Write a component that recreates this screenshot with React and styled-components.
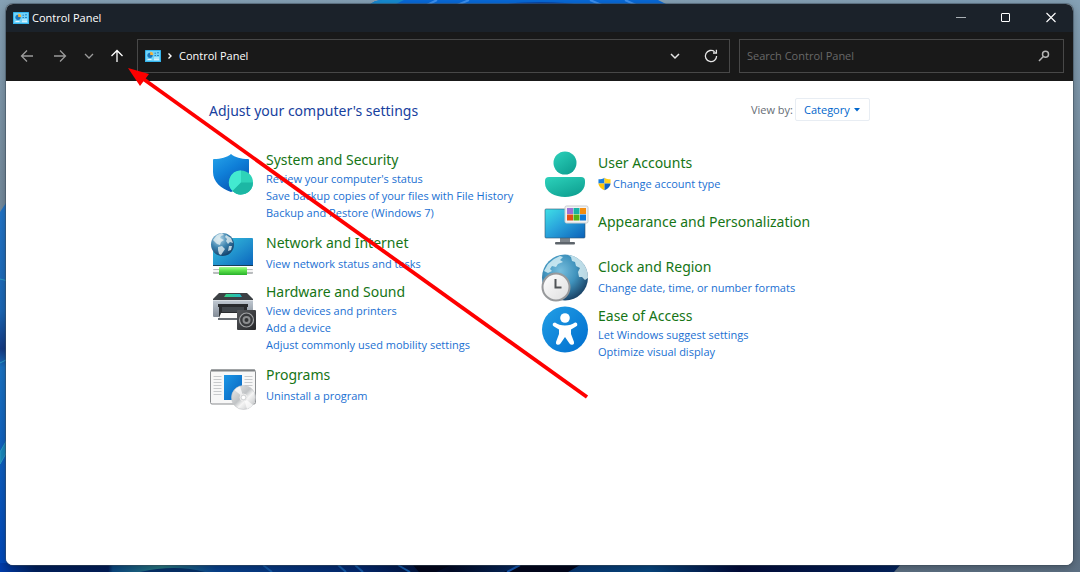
import React, { useState } from "react";
import styled, { createGlobalStyle } from "styled-components";

const leftCategories = [
  {
    title: "System and Security",
    icon: ShieldIcon,
    links: [
      "Review your computer's status",
      "Save backup copies of your files with File History",
      "Backup and Restore (Windows 7)",
    ],
  },
  {
    title: "Network and Internet",
    icon: NetworkIcon,
    links: ["View network status and tasks"],
  },
  {
    title: "Hardware and Sound",
    icon: PrinterIcon,
    links: [
      "View devices and printers",
      "Add a device",
      "Adjust commonly used mobility settings",
    ],
  },
  { title: "Programs", icon: ProgramsIcon, links: ["Uninstall a program"] },
];

const rightCategories = [
  {
    title: "User Accounts",
    icon: UserIcon,
    links: ["Change account type"],
    admin: true,
  },
  { title: "Appearance and Personalization", icon: AppearanceIcon, links: [] },
  {
    title: "Clock and Region",
    icon: ClockIcon,
    links: ["Change date, time, or number formats"],
  },
  {
    title: "Ease of Access",
    icon: AccessIcon,
    links: ["Let Windows suggest settings", "Optimize visual display"],
  },
];

export default function App() {
  const [query, setQuery] = useState("");
  const [view, setView] = useState("Category");

  return (
    <Desktop>
      <GlobalStyle />
      <Wallpaper />

      <Window>
        <TitleBar>
          <PanelIcon />
          <WindowTitle>Control Panel</WindowTitle>
          <WindowButton type="button" aria-label="Minimize">
            <svg width="12" height="12" viewBox="0 0 12 12">
              <path d="M1 5.5h10" stroke="#aab0b5" />
            </svg>
          </WindowButton>
          <WindowButton type="button" aria-label="Maximize">
            <svg width="12" height="12" viewBox="0 0 12 12">
              <rect x="1.5" y="1.5" width="8" height="8" rx="0.5" fill="none" stroke="#fff" />
            </svg>
          </WindowButton>
          <WindowButton type="button" aria-label="Close">
            <svg width="12" height="12" viewBox="0 0 12 12">
              <path d="M1.5 1l9 9M10.5 1l-9 9" stroke="#fff" strokeWidth="1.1" />
            </svg>
          </WindowButton>
        </TitleBar>

        <Toolbar>
          <NavButtons>
            <NavButton type="button" aria-label="Back" $width={33}>
              <svg width="16" height="16" viewBox="0 0 16 16">
                <path d="M14 8H2.5M8 2.5L2.5 8L8 13.5" />
              </svg>
            </NavButton>
            <NavButton type="button" aria-label="Forward" $width={34}>
              <svg width="16" height="16" viewBox="0 0 16 16">
                <path d="M2 8h11.5M8 2.5L13.5 8L8 13.5" />
              </svg>
            </NavButton>
            <NavButton type="button" aria-label="Recent locations" $width={24}>
              <svg width="10" height="10" viewBox="0 0 10 10">
                <path d="M1 3l4 4l4-4" />
              </svg>
            </NavButton>
            <NavButton type="button" aria-label="Up" $width={32} $active>
              <svg width="16" height="16" viewBox="0 0 16 16">
                <path d="M8 14V2.5M2.5 8L8 2.5L13.5 8" />
              </svg>
            </NavButton>
          </NavButtons>

          <AddressBar>
            <PanelIcon />
            <svg width="6" height="8" viewBox="0 0 6 8">
              <path d="M1.5 1.5L4 4L1.5 6.5" fill="none" stroke="#fff" strokeWidth="1.4" />
            </svg>
            <Crumb href="#control-panel">Control Panel</Crumb>
            <BarButton type="button" aria-label="Previous locations">
              <svg width="10" height="10" viewBox="0 0 10 10">
                <path d="M1 3l4 4l4-4" fill="none" stroke="#e6e6e6" strokeWidth="1.5" />
              </svg>
            </BarButton>
            <BarButton type="button" aria-label="Refresh">
              <svg width="14" height="14" viewBox="0 0 14 14">
                <path d="M12.6 7a5.6 5.6 0 1 1-2-4.3" fill="none" stroke="#e6e6e6" strokeWidth="1.3" />
                <path d="M9 4h3.4V0.8" fill="none" stroke="#e6e6e6" strokeWidth="1.3" />
              </svg>
            </BarButton>
          </AddressBar>

          <SearchBox>
            <input
              type="search"
              aria-label="Search Control Panel"
              placeholder="Search Control Panel"
              value={query}
              onChange={(e) => setQuery(e.target.value)}
            />
            <svg width="12" height="12" viewBox="0 0 12 12">
              <circle cx="7.5" cy="4.3" r="3" fill="none" stroke="#b5b5b5" strokeWidth="1.5" />
              <path d="M5.3 6.5L1 11" stroke="#b5b5b5" strokeWidth="1.5" />
            </svg>
          </SearchBox>
        </Toolbar>

        <Content>
          <Inner>
            <Heading>
              <h1>Adjust your computer's settings</h1>
              <label htmlFor="view">View by:</label>
              <SelectWrap>
                <select id="view" value={view} onChange={(e) => setView(e.target.value)}>
                  <option>Category</option>
                  <option>Large icons</option>
                  <option>Small icons</option>
                </select>
                <svg width="6" height="4" viewBox="0 0 6 4">
                  <path d="M0 0h6L3 3.5z" fill="#0066cc" />
                </svg>
              </SelectWrap>
            </Heading>

            <Columns>
              <CategoryList items={leftCategories} />
              <CategoryList items={rightCategories} />
            </Columns>
          </Inner>
        </Content>
      </Window>

      <PointerArrow viewBox="0 0 462 332" aria-hidden="true">
        <path d="M14 10L459 329" stroke="#fe0000" strokeWidth="3.8" />
        <path d="M0 0L21 6L12 18z" fill="#fe0000" />
      </PointerArrow>
    </Desktop>
  );
}

function CategoryList({ items }) {
  return (
    <List>
      {items.map(({ title, icon: Icon, links, admin }) => (
        <Category key={title} $top={links.length > 1}>
          <Icon />
          <CategoryText $count={links.length}>
            <CategoryTitle href="#category">{title}</CategoryTitle>
            {links.map((text) => (
              <TaskLink key={text} href="#task">
                {admin && <AdminShield />}
                {text}
              </TaskLink>
            ))}
          </CategoryText>
        </Category>
      ))}
    </List>
  );
}

/* ---------------------- icons ---------------------- */

function PanelIcon() {
  return (
    <svg width="16" height="12" viewBox="0 0 16 12">
      <rect width="16" height="12" rx="0.5" fill="#35b5ee" />
      <rect x="1" y="1" width="14" height="10" fill="#70d2f8" />
      <circle cx="5" cy="5.3" r="2.6" fill="#1b74ba" />
      <path d="M5.2 4.9V1.8a3 3 0 0 1 3 3.1z" fill="#f5b13b" />
      <path d="M2.5 9.5h4" stroke="#e8f8ff" />
      <path d="M9.5 3.2h1.5M12 2.8h2M9.5 5.5h1.5M12 5.5h2" stroke="#2a82bf" />
      <path d="M9 8h5M9 9.7h5" stroke="#e8f8ff" />
    </svg>
  );
}

function AdminShield() {
  return (
    <svg width="13" height="14" viewBox="0 0 14 14">
      <path d="M7 0.3C5.5 1.5 3 2 0.5 2v4.500H7z" fill="#1a7fe0" />
      <path d="M7 0.3C8.5 1.5 11 2 13.5 2v4.500H7z" fill="#ffd21c" />
      <path d="M0.5 6.5C0.8 10 4 12.5 7 13.7V6.5z" fill="#fcc60b" />
      <path d="M13.5 6.5C13.2 10 10 12.5 7 13.7V6.5z" fill="#0f62c4" />
    </svg>
  );
}

function ShieldIcon() {
  return (
    <svg width="48" height="48" viewBox="0 0 48 48">
      <defs>
        <linearGradient id="shield" x1="0" y1="0" x2="0.6" y2="1">
          <stop offset="0" stopColor="#27a5ea" />
          <stop offset="0.5" stopColor="#0f7fd8" />
          <stop offset="1" stopColor="#0756b4" />
        </linearGradient>
      </defs>
      <path
        d="M22 4C18 7.500 12 9 5 9Q4 9 4 10V22C4 32 12 38.500 22 42C32 38.500 40 32 40 22V10Q40 9 39 9C32 9 26 7.500 22 4z"
        fill="url(#shield)"
      />
      <circle cx="32" cy="32.5" r="12" fill="#2ed3b8" />
      <path d="M32 32.500L23.500 41A12 12 0 0 1 32 20.500z" fill="#43e9d0" />
      <path d="M32 32.500h12A12 12 0 0 1 23.500 41z" fill="#1cb7a4" />
    </svg>
  );
}

function NetworkIcon() {
  return (
    <svg width="48" height="48" viewBox="0 0 48 48">
      <defs>
        <linearGradient id="netScreen" x1="0" y1="0" x2="1" y2="1">
          <stop offset="0" stopColor="#36c5de" />
          <stop offset="0.5" stopColor="#2396cf" />
          <stop offset="1" stopColor="#0a64bd" />
        </linearGradient>
        <radialGradient id="netGlobe" cx="0.35" cy="0.25" r="0.8">
          <stop offset="0" stopColor="#b9dcec" />
          <stop offset="0.5" stopColor="#3d83ae" />
          <stop offset="1" stopColor="#123f68" />
        </radialGradient>
        <linearGradient id="cable" x1="0" y1="0" x2="0" y2="1">
          <stop offset="0" stopColor="#a5fa8e" />
          <stop offset="0.4" stopColor="#61e64f" />
          <stop offset="1" stopColor="#28b02b" />
        </linearGradient>
      </defs>
      <rect x="4" y="8" width="40" height="28" rx="1" fill="url(#netScreen)" />
      <path d="M4 35.500h40" stroke="#173e57" strokeWidth="1.2" />
      <rect x="4" y="39" width="40" height="5" rx="1" fill="#b9bcbe" />
      <path d="M4 41h40" stroke="#f5f5f5" strokeWidth="2" />
      <rect x="10" y="37" width="28" height="8" rx="0.5" fill="url(#cable)" />
      <circle cx="13.5" cy="14.5" r="11.5" fill="url(#netGlobe)" />
      <path
        d="M4 10l4-5l5-2l2 2l-3 1l-1 2l4 2l-3 2l-1 3l-3-1l-2-2zM17 5l5 3l2 5l-3-1l-2 2l-2-3l1-2l-2-2zM9 17l4-1l3 3l-2 3l-2 3l-2-1l-1-4zM20 16l3 0l-1 4l-3 1z"
        fill="#e4eff1"
        opacity="0.8"
      />
    </svg>
  );
}

function PrinterIcon() {
  return (
    <svg width="48" height="48" viewBox="0 0 48 48">
      <defs>
        <linearGradient id="printer" x1="0" y1="0" x2="0" y2="1">
          <stop offset="0" stopColor="#c1c9d2" />
          <stop offset="1" stopColor="#848d98" />
        </linearGradient>
        <linearGradient id="speaker" x1="0" y1="0" x2="1" y2="1">
          <stop offset="0" stopColor="#55585c" />
          <stop offset="1" stopColor="#252628" />
        </linearGradient>
        <linearGradient id="lid" x1="0" y1="0" x2="1" y2="0">
          <stop offset="0" stopColor="#35d07f" />
          <stop offset="1" stopColor="#22b7c8" />
        </linearGradient>
      </defs>
      <path d="M10 11h28l6 6v2H4v-2z" fill="#3d4145" />
      <path d="M17 12h14l2 3H15z" fill="url(#lid)" />
      <path d="M4 18h40v16q0 1-1 1H5q-1 0-1-1z" fill="url(#printer)" />
      <path d="M4 18.5h40" stroke="#d8dde2" />
      <path d="M9 22h30v3H9zM10 24h28v13H10z" fill="#292b2e" />
      <path d="M13 25h22v5H13z" fill="#41464b" />
      <path d="M12 31h24l1 5H10z" fill="#fafafa" />
      <path d="M9 36h28v2H9z" fill="#686d73" />
      <rect x="28" y="28" width="19" height="20" rx="1" fill="url(#speaker)" />
      <circle cx="37.5" cy="38" r="7" fill="#393b3e" stroke="#a2a4a6" strokeWidth="1.2" />
      <circle cx="37.5" cy="38" r="4" fill="#8c8e90" />
      <circle cx="37.5" cy="38" r="2" fill="#323436" />
    </svg>
  );
}

function ProgramsIcon() {
  return (
    <svg width="48" height="48" viewBox="0 0 48 48">
      <defs>
        <linearGradient id="programDoc" x1="0" y1="0" x2="1" y2="1">
          <stop offset="0" stopColor="#1b96e6" />
          <stop offset="1" stopColor="#0762bd" />
        </linearGradient>
        <linearGradient id="disc" x1="0" y1="0" x2="1" y2="1">
          <stop offset="0" stopColor="#eeeeee" />
          <stop offset="0.45" stopColor="#c0c3c5" />
          <stop offset="0.6" stopColor="#f5f5f5" />
          <stop offset="1" stopColor="#b5b8ba" />
        </linearGradient>
      </defs>
      <rect x="1.5" y="8" width="45" height="34" rx="1.5" fill="#f7f7f7" stroke="#8a8d90" />
      <path d="M2 8.500h44" stroke="#7e8184" strokeWidth="2" />
      <path
        d="M4.500 14.500h8M4.500 17.500h8M4.500 20.500h8M4.500 23.500h8M4.500 26.500h8M4.500 29.500h8M4.500 32.500h8M35.500 14.500h8M35.500 17.500h8M35.500 20.500h8M35.500 23.500h8"
        stroke="#c8cacc"
      />
      <rect x="15" y="13" width="18" height="25" fill="url(#programDoc)" />
      <circle cx="34.5" cy="35.5" r="12" fill="url(#disc)" stroke="#c3c5c7" strokeWidth="0.6" />
      <path d="M34.500 35.500L25.500 28A12 12 0 0 1 31 24.200z" fill="#fff" opacity="0.7" />
      <path d="M34.500 35.500L44 43A12 12 0 0 1 38 47z" fill="#fff" opacity="0.7" />
      <circle cx="34.5" cy="35.5" r="3.5" fill="#d5d7d8" stroke="#eee" />
      <circle cx="34.5" cy="35.5" r="1.8" fill="#fff" />
    </svg>
  );
}

function UserIcon() {
  return (
    <svg width="48" height="48" viewBox="0 0 48 48">
      <defs>
        <linearGradient id="user" x1="0" y1="0" x2="0.7" y2="1">
          <stop offset="0" stopColor="#2dd2bb" />
          <stop offset="1" stopColor="#0fa192" />
        </linearGradient>
      </defs>
      <circle cx="24" cy="13" r="11.5" fill="url(#user)" />
      <path d="M8 27h32q4 0 4 4v2C44 42 34 47 24 47S4 42 4 33v-2q0-4 4-4z" fill="url(#user)" />
    </svg>
  );
}

function AppearanceIcon() {
  return (
    <svg width="48" height="48" viewBox="0 0 48 48">
      <defs>
        <linearGradient id="monitor" x1="0" y1="0" x2="1" y2="1">
          <stop offset="0" stopColor="#3fe0e6" />
          <stop offset="0.45" stopColor="#2aa5dc" />
          <stop offset="1" stopColor="#0b60b8" />
        </linearGradient>
      </defs>
      <path d="M19 35h10v6H19z" fill="#7e858b" />
      <rect x="14" y="40" width="20" height="2.5" rx="1" fill="#5d646b" />
      <rect x="4" y="7" width="40" height="29" rx="1" fill="url(#monitor)" stroke="#31566f" strokeWidth="0.6" />
      <rect x="24" y="4" width="23" height="17" rx="1.5" fill="#f3f3f3" stroke="#c7cbce" />
      <path d="M26 6h6v6h-6z" fill="#9d6fd6" />
      <path d="M32.500 6h6v6h-6z" fill="#18b2a4" />
      <path d="M39 6h6v6h-6z" fill="#f28c0f" />
      <path d="M26 12.500h6v6h-6z" fill="#e64d17" />
      <path d="M32.500 12.500h6v6h-6z" fill="#52b315" />
      <path d="M39 12.500h6v6h-6z" fill="#0d78d7" />
    </svg>
  );
}

function ClockIcon() {
  return (
    <svg width="48" height="48" viewBox="0 0 48 48">
      <defs>
        <radialGradient id="globe" cx="0.4" cy="0.35" r="0.7">
          <stop offset="0" stopColor="#78bedd" />
          <stop offset="0.5" stopColor="#4093bd" />
          <stop offset="1" stopColor="#173d60" />
        </radialGradient>
        <linearGradient id="clockFace" x1="0" y1="0" x2="1" y2="1">
          <stop offset="0" stopColor="#ffffff" />
          <stop offset="1" stopColor="#dedede" />
        </linearGradient>
        <clipPath id="globeClip">
          <circle cx="24" cy="23.5" r="23" />
        </clipPath>
      </defs>
      <circle cx="24" cy="23.5" r="23" fill="url(#globe)" />
      <path
        d="M3 17l4-7l6-5l6-3l3 1l-3 3l3 2l-5 2l-2 3l-4-1l-2 3l2 2l-4 2zM27 1l8 1l7 6l5 9l0 7l-3 2l-3-3l-3 0l-1-5l2-4l-4-2l-1-4l-3-1l-1-4zM5 23l3-1l-2 3z"
        fill="#d6eef4"
        opacity="0.85"
        clipPath="url(#globeClip)"
      />
      <circle cx="15" cy="33" r="13.5" fill="url(#clockFace)" stroke="#97999b" strokeWidth="2" />
      <path d="M14.500 25v8.500h6" fill="none" stroke="#515457" strokeWidth="2" />
    </svg>
  );
}

function AccessIcon() {
  return (
    <svg width="48" height="48" viewBox="0 0 48 48">
      <defs>
        <linearGradient id="access" x1="0" y1="0" x2="1" y2="1">
          <stop offset="0" stopColor="#229fe5" />
          <stop offset="1" stopColor="#006dce" />
        </linearGradient>
      </defs>
      <circle cx="24" cy="23.5" r="23" fill="url(#access)" />
      <circle cx="24" cy="12" r="4.8" fill="#fff" />
      <path
        d="M14 16.500Q18 19.500 24 19.500T34 16.500Q36 16 36.300 18T35 20.500L30 23.500V28L33 36Q33.500 38.500 31.500 38.800T28.500 37.500L24 31L19.500 37.500Q18.500 39 16.500 38.800T15 36L18 28V23.500L13 20.500Q11.400 19.500 11.700 18T14 16.500z"
        fill="#fff"
      />
    </svg>
  );
}

function Wallpaper() {
  return (
    <WallpaperSvg viewBox="0 0 1080 572" preserveAspectRatio="none" aria-hidden="true">
      <defs>
        <linearGradient id="sky" x1="0" y1="0" x2="0" y2="1">
          <stop offset="0" stopColor="#85a1b5" />
          <stop offset="0.3" stopColor="#768c9e" />
          <stop offset="1" stopColor="#5c6f82" />
        </linearGradient>
        <linearGradient id="leftBloom" x1="0" y1="0" x2="0" y2="1">
          <stop offset="0" stopColor="#2376c9" />
          <stop offset="0.3" stopColor="#1b66b4" />
          <stop offset="0.4" stopColor="#143a83" />
          <stop offset="0.45" stopColor="#1a72c2" />
          <stop offset="1" stopColor="#0046b8" />
        </linearGradient>
        <linearGradient id="floor" x1="0" y1="0" x2="1" y2="0">
          <stop offset="0" stopColor="#003caa" />
          <stop offset="0.04" stopColor="#01205c" />
          <stop offset="0.12" stopColor="#021d57" />
          <stop offset="0.125" stopColor="#0b4780" />
          <stop offset="0.18" stopColor="#287982" />
          <stop offset="0.24" stopColor="#08418c" />
          <stop offset="0.4" stopColor="#03286f" />
          <stop offset="0.5" stopColor="#020a26" />
          <stop offset="0.59" stopColor="#062e69" />
          <stop offset="0.72" stopColor="#07467f" />
          <stop offset="0.82" stopColor="#020b39" />
          <stop offset="1" stopColor="#04245e" />
        </linearGradient>
      </defs>
      <rect width="1080" height="572" fill="url(#sky)" />
      <path d="M0 212L8 200V572H0z" fill="url(#leftBloom)" />
      <path d="M0 279l8 2M0 363l8-4M0 452l8-14v12l-8 14z" stroke="#2a9dc4" fill="#1a88bd" />
      <path d="M368 6Q374 0 382 0H658L670 6z" fill="#0869d8" />
      <path d="M368 6Q374 0 382 0h22l-12 6z" fill="#168bd1" />
      <path d="M425 6l12-6M455 6l14-6M590 0l14 6M625 0l13 6" stroke="#3b91f3" strokeWidth="2" />
      <path d="M496 6Q515 2 540 2T588 6z" fill="#0747a9" />
      <path d="M0 563H902L894 572H0z" fill="url(#floor)" />
      <path d="M140 572Q175 564 205 572z" fill="#063168" />
      <path d="M263 565l9 7M338 565l8 7M355 565l8 7M398 565l12 7" stroke="#145aa7" strokeWidth="2" />
      <path d="M413 565h38l-15 7h-17zM520 565h60l-12 7h-64z" fill="#02061c" />
      <path d="M520 565l-13 7" stroke="#1556ad" strokeWidth="2" />
    </WallpaperSvg>
  );
}

/* ---------------------- styled-components ---------------------- */

const GlobalStyle = createGlobalStyle`
  * { box-sizing: border-box; }

  body {
    margin: 0;
    font-family: "Open Sans", "Noto Sans", sans-serif;
    font-size: 11px;
    color: #111;
  }

  button, input, select { font: inherit; }
  a { text-decoration: none; }
  svg { flex: none; display: block; }
`;

const Desktop = styled.div`
  position: relative;
  min-height: 100vh;
  display: flex;
  padding: 4px 7px 7px 6px;
  background: #768c9e;
`;

const WallpaperSvg = styled.svg`
  position: absolute;
  inset: 0;
  width: 100%;
  height: 100%;
`;

const Window = styled.div`
  position: relative;
  flex: 1;
  min-width: 0;
  display: flex;
  flex-direction: column;
  border-radius: 7px;
  overflow: hidden;
  background: #fff;
  box-shadow: 0 0 0 1px rgba(60, 75, 90, 0.5), 0 2px 8px rgba(0, 0, 0, 0.3);
`;

const TitleBar = styled.header`
  height: 28px;
  display: flex;
  align-items: center;
  padding-left: 7px;
  background: #1b222a;
  color: #fff;
`;

const WindowTitle = styled.span`
  flex: 1;
  padding-left: 3px;
  line-height: 16px;
`;

const WindowButton = styled.button`
  width: 45px;
  height: 28px;
  display: grid;
  place-items: center;
  padding: 0;
  border: 0;
  background: transparent;
`;

const Toolbar = styled.nav`
  height: 49px;
  display: flex;
  align-items: center;
  padding: 0 9px 2px 4px;
  background: #191919;
`;

const NavButtons = styled.div`
  display: flex;
  width: 127px;
`;

const NavButton = styled.button`
  width: ${({ $width }) => $width}px;
  height: 32px;
  display: grid;
  place-items: center;
  padding: 0;
  border: 0;
  background: transparent;

  svg {
    fill: none;
    stroke: ${({ $active }) => ($active ? "#fff" : "#9b9b9b")};
    stroke-width: 1.3;
  }
`;

const AddressBar = styled.div`
  flex: 584;
  height: 34px;
  display: flex;
  align-items: center;
  padding: 0 0 0 7px;
  border: 1px solid #484848;

  > svg + svg { margin-left: 6px; }
`;

const Crumb = styled.a`
  flex: 1;
  padding-left: 6px;
  line-height: 16px;
  color: #fff;
`;

const BarButton = styled.button`
  width: 36px;
  height: 32px;
  display: grid;
  place-items: center;
  padding: 0;
  border: 0;
  background: transparent;
`;

const SearchBox = styled.div`
  flex: 303;
  height: 34px;
  display: flex;
  align-items: center;
  margin-left: 9px;
  padding: 0 13px 0 7px;
  border: 1px solid #484848;

  input {
    flex: 1;
    min-width: 0;
    padding: 0;
    border: 0;
    outline: 0;
    background: transparent;
    color: #fff;
  }
  input::placeholder { color: #686868; opacity: 1; }
`;

const Content = styled.main`
  flex: 1;
  padding: 17px 20px 24px;
  background: #fff;
`;

const Inner = styled.div`
  max-width: 661px;
  margin: 0 auto;
`;

const Heading = styled.div`
  display: flex;
  align-items: flex-start;

  h1 {
    flex: 1;
    margin: 0;
    font-family: "Noto Sans", sans-serif;
    font-size: 14px;
    line-height: 26px;
    font-weight: 400;
    color: #17419e;
  }
  label {
    line-height: 23px;
    color: #666d75;
  }
`;

const SelectWrap = styled.div`
  position: relative;
  margin-left: 2px;

  select {
    display: block;
    appearance: none;
    width: 75px;
    height: 23px;
    padding: 0 16px 0 8px;
    border: 1px solid #e8edf3;
    border-radius: 2px;
    background: #fff;
    color: #0066cc;
  }
  svg {
    position: absolute;
    top: 10px;
    right: 10px;
    pointer-events: none;
  }
`;

const Columns = styled.div`
  display: grid;
  grid-template-columns: 332px minmax(0, 1fr);
  margin-top: 26px;
`;

const List = styled.div`
  display: flex;
  flex-direction: column;
  gap: 4px;
`;

const Category = styled.section`
  min-height: 48px;
  display: flex;
  align-items: ${({ $top }) => ($top ? "flex-start" : "center")};
  gap: 9px;
`;

/* a lone title or a title with one link sits a little above the icon's middle */
const textPadding = (count) => {
  if (count === 0) return 8;
  return count === 1 ? 3 : 5;
};

const CategoryText = styled.div`
  display: flex;
  flex-direction: column;
  align-items: flex-start;
  gap: ${({ $count }) => ($count === 1 ? 2 : 0)}px;
  padding-bottom: ${({ $count }) => textPadding($count)}px;
`;

const CategoryTitle = styled.a`
  font-family: "Noto Sans", sans-serif;
  font-size: 14px;
  line-height: 20px;
  color: #167516;
`;

const TaskLink = styled.a`
  display: flex;
  align-items: center;
  gap: 2px;
  line-height: 17px;
  color: #1a70d2;
`;

const PointerArrow = styled.svg`
  position: absolute;
  left: 128px;
  top: 68px;
  width: 462px;
  height: 332px;
  pointer-events: none;
`;
